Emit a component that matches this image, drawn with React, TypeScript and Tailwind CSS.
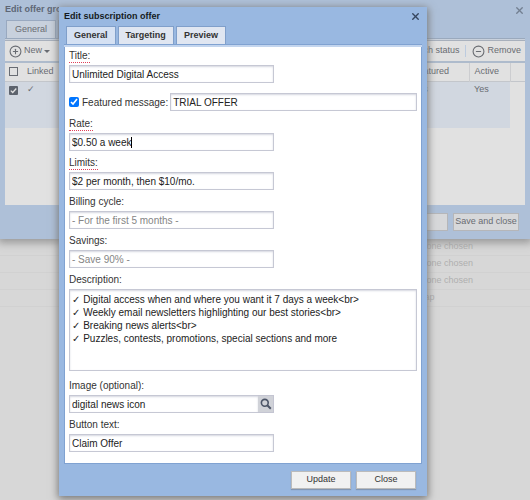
import type { ReactNode } from "react";
import { CircleMinus, CirclePlus, X } from "lucide-react";

const inputClass =
  "h-[18px] w-full border border-[#c6c8d4] bg-white px-[2px] text-[10px] text-[#222] shadow-[inset_0_1px_2px_#d6d7e0] outline-none placeholder:text-[#858585]";

type FieldProps = {
  id: string;
  label: string;
  required?: boolean;
  wide?: boolean;
  children: ReactNode;
};

const Field = ({ id, label, required, wide, children }: FieldProps) => (
  <div className={wide ? "flex flex-col" : "flex w-[59%] flex-col"}>
    <label
      htmlFor={id}
      className={`mb-[2px] self-start border-b border-dotted leading-[12px] ${
        required ? "border-[#e0405a]" : "border-transparent"
      }`}
    >
      {label}
    </label>
    {children}
  </div>
);

const SearchIcon = () => (
  <svg width="12" height="12" viewBox="0 0 12 12" fill="none" stroke="currentColor">
    <circle cx="4.8" cy="4.8" r="3.4" strokeWidth="1.6" />
    <path d="M7.3 7.3 L10.8 10.8" strokeWidth="2" />
  </svg>
);

const tabs = ["General", "Targeting", "Preview"];

const description = [
  "✓ Digital access when and where you want it 7 days a week<br>",
  "✓ Weekly email newsletters highlighting our best stories<br>",
  "✓ Breaking news alerts<br>",
  "✓ Puzzles, contests, promotions, special sections and more",
].join("\n");

const pageRows = ["None chosen", "None chosen", "None chosen", "Tap"];

const GroupDialog = () => (
  <section className="relative flex flex-col bg-[#aec0d8] px-[5px] pb-2 text-[9px] text-[#696c72] shadow-[0_2px_8px_2px_#999]">
    <header className="flex h-5 items-center justify-between">
      <h2 className="font-bold text-[#5d6675]">Edit offer group</h2>
      <button type="button" aria-label="Close offer group" className="text-[#737f91]">
        <X size={11} strokeWidth={3} />
      </button>
    </header>
    <div className="flex gap-[2px] pl-[1px]">
      <button type="button" className="h-[18px] w-[50px] border border-b-0 border-[#99a9c0] bg-[#c8d1dd]">
        General
      </button>
      <span className="h-[18px] w-[50px] border border-b-0 border-[#99a9c0] bg-[#cdd2da]" />
    </div>
    <div className="border-t border-[#9aa9bd] bg-[#c9d1dc] pt-px">
      <div className="h-[165px] bg-[#e1e1e1]">
        <div className="flex h-[21px] items-center justify-between border-t border-[#a8b0bc] pr-1 pl-1">
          <button type="button" className="flex items-center gap-[2px]">
            <CirclePlus size={13} strokeWidth={2} />
            New
            <span className="border-x-[3px] border-t-[3px] border-x-transparent border-t-[#696c72]" />
          </button>
          <div className="flex items-center gap-[6px]">
            <button type="button">Switch status</button>
            <span className="h-3 w-px bg-[#bccbdf]" />
            <button type="button" className="flex items-center gap-[2px]">
              <CircleMinus size={13} strokeWidth={2} />
              Remove
            </button>
          </div>
        </div>
        <table className="w-full table-fixed border-collapse border-t-2 border-[#aebbcc] text-left">
          <thead>
            <tr className="h-[19px] border-b border-[#c3c6cb]">
              <th className="w-[18px] pl-1">
                <input
                  type="checkbox"
                  aria-label="Select all"
                  className="block h-[9px] w-[9px] appearance-none border border-[#686c73]"
                />
              </th>
              <th className="pl-1 font-normal">Linked</th>
              <th className="w-[56px] font-normal">Featured</th>
              <th className="w-[41px] border-x border-[#cccdd0] pl-[5px] font-normal">Active</th>
              <th className="w-[15px]" />
            </tr>
          </thead>
          <tbody>
            <tr className="h-[47px] bg-[#d1d7e0] align-top">
              <td className="pt-1 pl-1">
                <span className="relative block h-[9px] w-[9px] text-[#e1e1e1]">
                  <input
                    type="checkbox"
                    aria-label="Select offer"
                    defaultChecked
                    className="block h-[9px] w-[9px] appearance-none rounded-[1px] bg-[#5d636d]"
                  />
                  <svg
                    className="pointer-events-none absolute inset-0"
                    viewBox="0 0 9 9"
                    fill="none"
                    stroke="currentColor"
                    strokeWidth="1.3"
                  >
                    <path d="M1.8 4.6 L3.7 6.5 L7.3 2.5" />
                  </svg>
                </span>
              </td>
              <td className="pt-px pl-1">✓</td>
              <td className="pt-px">Yes</td>
              <td className="pt-px pl-[5px]">Yes</td>
              <td className="bg-[#e1e1e1]" />
            </tr>
          </tbody>
        </table>
      </div>
    </div>
    <footer className="flex justify-end gap-[5px] pt-2 pr-[6px]">
      <button type="button" className="h-[18px] w-[66px] border border-[#b5b6b9] bg-[#d7d8da]">
        Save
      </button>
      <button type="button" className="h-[18px] w-[66px] border border-[#b5b6b9] bg-[#d7d8da] whitespace-nowrap">
        Save and close
      </button>
    </footer>
  </section>
);

const OfferDialog = () => (
  <section
    role="dialog"
    aria-label="Edit subscription offer"
    className="bg-[#99b8e1] px-[5px] text-[10px] text-[#333] shadow-[0_2px_8px_1px_#777]"
  >
    <header className="flex h-[19px] items-center justify-between pr-[1px]">
      <h1 className="text-[9px] font-bold text-[#151a22]">Edit subscription offer</h1>
      <button type="button" aria-label="Close dialog" className="text-[#35455e]">
        <X size={11} strokeWidth={3} />
      </button>
    </header>

    <nav className="flex gap-[2px] pl-[2px] text-[9px] font-bold">
      {tabs.map((tab) => (
        <button
          key={tab}
          type="button"
          className={`h-[18px] border border-b-0 border-[#809fca] px-[7px] ${
            tab === "General" ? "bg-[#d5e1f3]" : "bg-[#e0e6f1]"
          }`}
        >
          {tab}
        </button>
      ))}
    </nav>

    <div className="border-t border-[#80a2d1] bg-[#c3d5ee] pt-[2px]">
      <form className="flex flex-col gap-[6px] border-x border-b border-[#80a2d1] bg-white px-1 pt-[3px] pb-[11px]">
        <Field id="title" label="Title:" required>
          <input id="title" className={inputClass} defaultValue="Unlimited Digital Access" />
        </Field>

        <div className="flex items-center pt-1 pb-px">
          <input id="featured" type="checkbox" defaultChecked className="h-[10px] w-[10px] accent-[#0075ff]" />
          <label htmlFor="featured" className="mr-[2px] ml-[3px] whitespace-nowrap">
            Featured message:
          </label>
          <input
            aria-label="Featured message text"
            className={`${inputClass} min-w-0 flex-1`}
            defaultValue="TRIAL OFFER"
          />
        </div>

        <Field id="rate" label="Rate:" required>
          <div className="relative">
            <input id="rate" className={`${inputClass} block caret-transparent`} defaultValue="$0.50 a week" />
            <span className="pointer-events-none absolute top-1 left-[62px] h-[11px] w-px bg-black" />
          </div>
        </Field>
        <Field id="limits" label="Limits:" required>
          <input id="limits" className={inputClass} defaultValue="$2 per month, then $10/mo." />
        </Field>
        <Field id="billing" label="Billing cycle:">
          <input id="billing" className={inputClass} placeholder="- For the first 5 months -" />
        </Field>
        <Field id="savings" label="Savings:">
          <input id="savings" className={inputClass} placeholder="- Save 90% -" />
        </Field>

        <Field id="description" label="Description:" wide>
          <textarea
            id="description"
            className="mb-[3px] block h-[82px] w-full resize-none border border-[#c6c8d4] px-[2px] py-[3px] leading-[13px] text-[#222] shadow-[inset_0_1px_2px_#d6d7e0] outline-none"
            defaultValue={description}
          />
        </Field>

        <Field id="image" label="Image (optional):">
          <div className="flex">
            <input id="image" className={`${inputClass} min-w-0 flex-1 border-r-0`} defaultValue="digital news icon" />
            <button
              type="button"
              aria-label="Browse images"
              className="flex h-[18px] w-4 items-center justify-center border border-l-0 border-[#c4c5d2] bg-[#d0d2d8] text-[#4c5567]"
            >
              <SearchIcon />
            </button>
          </div>
        </Field>
        <Field id="button-text" label="Button text:">
          <input id="button-text" className={inputClass} defaultValue="Claim Offer" />
        </Field>
      </form>
    </div>

    <footer className="flex justify-end gap-[5px] pt-[7px] pr-[6px] pb-[7px] text-[9px]">
      <button type="button" className="h-[18px] w-[60px] border border-[#bbb] bg-[#f1f1f1] shadow-[0_1px_1px_#8296b3]">
        Update
      </button>
      <button type="button" className="h-[18px] w-[60px] border border-[#bbb] bg-[#f1f1f1] shadow-[0_1px_1px_#8296b3]">
        Close
      </button>
    </footer>
  </section>
);

const App = () => {
  return (
    <main className="relative min-h-screen overflow-hidden bg-[#d7d7d7] font-['Liberation_Sans','DejaVu_Sans',sans-serif]">
      <GroupDialog />
      <ul className="text-[9px] text-[#afafaf]">
        {pageRows.map((row, i) => (
          <li key={i} className="flex h-[17px] items-center justify-end border-b border-[#d1d1d1] pr-[57px]">
            <span className="w-[53px] whitespace-nowrap">{row}</span>
          </li>
        ))}
      </ul>
      <div className="absolute inset-x-0 top-0 pt-[7px] pr-[103px] pl-[59px]">
        <OfferDialog />
      </div>
    </main>
  );
};

export default App;
